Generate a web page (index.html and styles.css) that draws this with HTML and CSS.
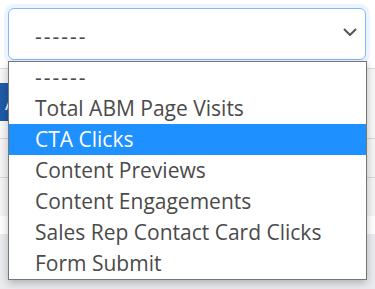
FILE: index.html
```html
<!DOCTYPE html>
<html lang="en">
<head>
  <meta charset="UTF-8">
  <meta name="viewport" content="width=device-width, initial-scale=1.0">
  <title>Metric Filter</title>
  <link rel="stylesheet" href="styles.css">
</head>
<body>
  <div class="page">
    <div class="filter-row">
      <div class="metric-select">
        <span class="metric-value dashes">------</span>
        <svg class="chevron" width="14" height="8" viewBox="0 0 14 8">
          <path d="M1 1 L7 7 L13 1" fill="none" stroke="#555" stroke-width="2"/>
        </svg>
      </div>

      <ul class="metric-options">
        <li><span class="dashes">------</span></li>
        <li>Total ABM Page Visits</li>
        <li class="selected">CTA Clicks</li>
        <li>Content Previews</li>
        <li>Content Engagements</li>
        <li>Sales Rep Contact Card Clicks</li>
        <li>Form Submit</li>
      </ul>
    </div>

    <div class="toolbar">
      <button class="add-button">Add</button>
    </div>

    <div class="table">
      <div class="table-row"></div>
      <div class="table-row"></div>
    </div>

    <div class="footer"></div>
  </div>
</body>
</html>
```

FILE: styles.css
```css
  body {
    margin: 0;
    background-color: #ffffff;
    font-family: "Open Sans", "Noto Sans", sans-serif;
    color: #4a4a4a;
  }

  .page {
    height: 289px;
    overflow: hidden;
    display: flex;
    flex-direction: column;
  }

  .filter-row {
    position: relative;
    padding: 8px 9px 8px 8px;
  }

  .metric-select {
    height: 50px;
    border: 1px solid #86b7fe;
    border-radius: 6px;
    box-shadow: 0 0 0 4px rgba(13, 110, 253, 0.08);
    display: flex;
    align-items: center;
    justify-content: space-between;
    padding: 0 8px 0 26px;
    font-size: 21px;
  }

  .metric-value {
    padding-top: 3px;
  }

  .dashes {
    letter-spacing: 2px;
  }

  .chevron {
    margin-top: -4px;
  }

  /* open dropdown list, sits over the page */
  .metric-options {
    position: absolute;
    top: 61px;
    left: 8px;
    width: 357px;
    margin: 0;
    padding: 0;
    list-style: none;
    background-color: #ffffff;
    border: 1px solid #767676;
    box-shadow: 0 3px 8px rgba(0, 0, 0, 0.25);
    z-index: 10;
  }

  .metric-options li {
    height: 31px;
    line-height: 31px;
    padding-left: 26px;
    font-size: 21px;
    white-space: nowrap;
  }

  .metric-options li.selected {
    background-color: #1e90ff;
    color: #ffffff;
  }

  .toolbar {
    border-top: 1px solid #dcdcdc;
    padding: 14px 0 17px;
    background-color: #f7f7f7;
  }

  .add-button {
    height: 38px;
    padding: 0 12px 0 5px;
    border: none;
    background-color: #1f5aa6;
    color: #ffffff;
    font-family: inherit;
    font-size: 20px;
  }

  .table-row {
    height: 38px;
    border-top: 1px solid #d6d6d6;
    background-color: #f4f4f4;
  }

  .footer {
    flex: 1;
    margin-top: 18px;
    background-color: #e9ebee;
  }
```
